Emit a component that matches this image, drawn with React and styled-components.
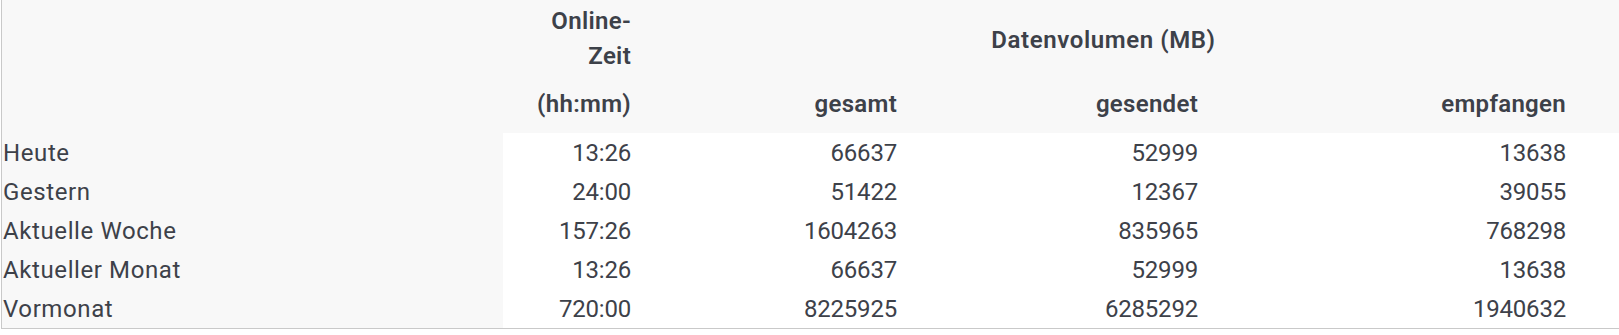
import React from 'react';
import styled, { createGlobalStyle } from 'styled-components';

const GlobalStyle = createGlobalStyle`
  body {
    margin: 0;
    background: #ffffff;
    font-family: Roboto, "Liberation Sans", sans-serif;
    color: #3d4149;
  }
`;

const rows = [
  { label: 'Heute', time: '13:26', total: '66637', sent: '52999', received: '13638' },
  { label: 'Gestern', time: '24:00', total: '51422', sent: '12367', received: '39055' },
  { label: 'Aktuelle Woche', time: '157:26', total: '1604263', sent: '835965', received: '768298' },
  { label: 'Aktueller Monat', time: '13:26', total: '66637', sent: '52999', received: '13638' },
  { label: 'Vormonat', time: '720:00', total: '8225925', sent: '6285292', received: '1940632' },
];

function App() {
  return (
    <>
      <GlobalStyle />
      <Table>
        <Corner />
        <HeadCell>
          Online-
          <br />
          Zeit
        </HeadCell>
        <GroupHead>Datenvolumen (MB)</GroupHead>

        <UnitCell>(hh:mm)</UnitCell>
        <UnitCell>gesamt</UnitCell>
        <UnitCell>gesendet</UnitCell>
        <UnitCell $last>empfangen</UnitCell>

        {rows.map(row => (
          <React.Fragment key={row.label}>
            <LabelCell>{row.label}</LabelCell>
            <ValueCell>{row.time}</ValueCell>
            <ValueCell>{row.total}</ValueCell>
            <ValueCell>{row.sent}</ValueCell>
            <ValueCell $last>{row.received}</ValueCell>
          </React.Fragment>
        ))}
      </Table>
    </>
  );
}

const Table = styled.div`
  display: grid;
  grid-template-columns: 501px 138px 266px 301px 1fr;
  grid-template-rows: 78px 55px repeat(5, 39px);
  margin-left: 1px;
  border-left: 1px solid #c9c9c9;
  border-bottom: 1px solid #c9c9c9;
  background: #f8f8f8;
  font-size: 24px;
`;

const Corner = styled.div`
  grid-row: span 2;
`;

const HeadCell = styled.div`
  padding: 4px 10px 0 0;
  text-align: right;
  font-weight: 600;
  line-height: 35px;
  letter-spacing: 0.3px;
`;

const GroupHead = styled.div`
  grid-column: span 3;
  display: flex;
  align-items: center;
  justify-content: center;
  padding: 1px 53px 0 0;
  font-weight: 600;
  letter-spacing: 0.6px;
`;

const UnitCell = styled.div`
  padding: 7px ${props => (props.$last ? '53px' : '10px')} 0 0;
  text-align: right;
  font-weight: 600;
  line-height: 39px;
  letter-spacing: 0.3px;
`;

const LabelCell = styled.div`
  padding: 2px 0 0 1px;
  line-height: 37px;
  letter-spacing: 0.6px;
  white-space: nowrap;
`;

const ValueCell = styled.div`
  padding: 2px ${props => (props.$last ? '53px' : '10px')} 0 0;
  background: #ffffff;
  text-align: right;
  line-height: 37px;
  letter-spacing: -0.2px;
`;

export default App;
